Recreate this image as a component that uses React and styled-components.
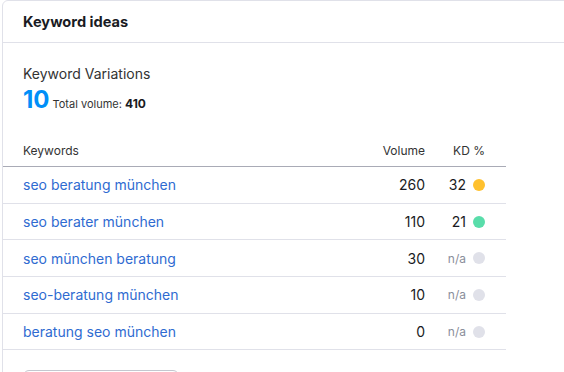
import React from "react";
import styled, { createGlobalStyle } from "styled-components";

const Global = createGlobalStyle`
  html, body { margin: 0; padding: 0; background: #fff; }
  body { font-family: Inter, "Open Sans", Arial, sans-serif; color: #191b23; }
`;

const Page = styled.div`
  width: 564px;
  height: 372px;
  overflow: hidden;
  padding-left: 2px;
  box-sizing: border-box;
`;

const Card = styled.div`
  width: 620px;
  height: 420px;
  border: 1px solid #e0e1e9;
  border-radius: 6px;
  background: #fff;
  box-sizing: border-box;
`;

const Header = styled.div`
  height: 41px;
  padding: 0 20px;
  display: flex;
  align-items: center;
  border-bottom: 1px solid #e0e1e9;
  font-size: 14.6px;
  font-weight: 700;
  color: #191b23;
`;

const Summary = styled.div`
  padding: 22px 20px 0;
  height: 93px;
  box-sizing: border-box;
`;

const Label = styled.div`
  font-size: 14px;
  color: #333;
  line-height: 18px;
`;

const Totals = styled.div`
  display: flex;
  align-items: baseline;
  gap: 3px;
  margin-top: 2px;
`;

const Big = styled.span`
  font-size: 24px;
  font-weight: 700;
  color: #008ff8;
  line-height: 30px;
`;

const Small = styled.span`
  font-size: 11px;
  color: #333;
  b { font-weight: 700; font-size: 12px; color: #191b23; }
`;

const Table = styled.div`
  width: 503px;
`;

const Row = styled.div`
  display: grid;
  grid-template-columns: 1fr 80px 60px;
  align-items: center;
  height: ${(p) => (p.$head ? "30px" : "35.7px")};
  border-bottom: 1px solid ${(p) => (p.$head ? "#a9abb6" : "#e0e1e9")};
  padding: 0 21px 0 20px;
`;

const HeadCell = styled.div`
  font-size: 12px;
  color: #333;
  text-align: ${(p) => (p.$right ? "right" : "left")};
  padding-bottom: 2px;
`;

const Link = styled.a`
  font-size: 14px;
  color: #2f6bd1;
  text-decoration: none;
`;

const Num = styled.div`
  font-size: 14px;
  color: #191b23;
  text-align: right;
`;

const Kd = styled.div`
  display: flex;
  justify-content: flex-end;
  align-items: center;
  gap: 7px;
`;

const KdValue = styled.span`
  font-size: ${(p) => (p.$na ? "12px" : "14px")};
  color: ${(p) => (p.$na ? "#8a8e9b" : "#191b23")};
`;

const Dot = styled.span`
  width: 12px;
  height: 12px;
  border-radius: 50%;
  background: ${(p) => p.$color};
`;

const Footer = styled.div`
  padding: 20px 20px 0;
`;

const Button = styled.div`
  width: 154px;
  height: 28px;
  border: 1px solid #c4c7cf;
  border-radius: 6px;
`;

const rows = [
  { kw: "seo beratung münchen", vol: 260, kd: "32", color: "#ffc12e" },
  { kw: "seo berater münchen", vol: 110, kd: "21", color: "#59ddaa" },
  { kw: "seo münchen beratung", vol: 30, kd: "n/a", color: "#e0e1e9" },
  { kw: "seo-beratung münchen", vol: 10, kd: "n/a", color: "#e0e1e9" },
  { kw: "beratung seo münchen", vol: 0, kd: "n/a", color: "#e0e1e9" },
];

export default function App() {
  return (
    <Page>
      <Global />
      <Card>
        <Header>Keyword ideas</Header>
        <Summary>
          <Label>Keyword Variations</Label>
          <Totals>
            <Big>10</Big>
            <Small>
              Total volume: <b>410</b>
            </Small>
          </Totals>
        </Summary>
        <Table>
          <Row $head>
            <HeadCell>Keywords</HeadCell>
            <HeadCell $right>Volume</HeadCell>
            <HeadCell $right>KD %</HeadCell>
          </Row>
          {rows.map((r) => (
            <Row key={r.kw}>
              <Link href="#">{r.kw}</Link>
              <Num>{r.vol}</Num>
              <Kd>
                <KdValue $na={r.kd === "n/a"}>{r.kd}</KdValue>
                <Dot $color={r.color} />
              </Kd>
            </Row>
          ))}
        </Table>
        <Footer>
          <Button />
        </Footer>
      </Card>
    </Page>
  );
}
